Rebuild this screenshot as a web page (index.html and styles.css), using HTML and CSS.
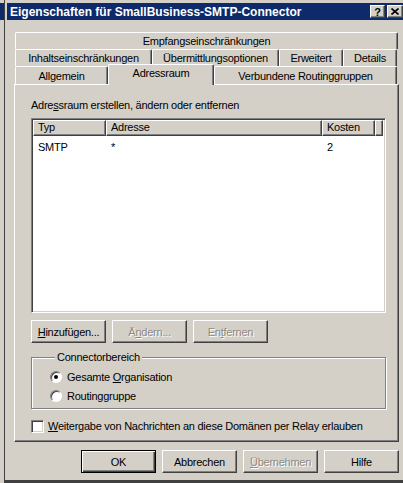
FILE: index.html
```html
<!DOCTYPE html>
<html lang="de">
<head>
  <meta charset="UTF-8">
  <title>Eigenschaften für SmallBusiness-SMTP-Connector</title>
  <link rel="stylesheet" href="styles.css">
</head>
<body>
  <div class="screen">
    <div class="behind"><div class="behind-cap"></div></div>
    <div class="window">
      <!-- Title bar -->
      <div class="titlebar">
        <span class="title">Eigenschaften für SmallBusiness-SMTP-Connector</span>
        <span class="capbtn help">?</span>
        <span class="capbtn close">
          <svg width="8" height="7" viewBox="0 0 8 7"><path d="M0.5 0.5 L7.5 6.5 M7.5 0.5 L0.5 6.5" stroke="#000" stroke-width="1.6"/></svg>
        </span>
      </div>

      <div class="client">
        <!-- Tabs -->
        <div class="tabrow">
          <div class="tab full">Empfangseinschränkungen</div>
        </div>
        <div class="tabrow">
          <div class="tab w-inhalt">Inhaltseinschränkungen</div>
          <div class="tab w-ueber">Übermittlungsoptionen</div>
          <div class="tab w-erw">Erweitert</div>
          <div class="tab w-det">Details</div>
        </div>
        <div class="tabrow last">
          <div class="tab w-allg">Allgemein</div>
          <div class="tab w-addr selected">Adressraum</div>
          <div class="tab w-verb">Verbundene Routinggruppen</div>
        </div>

        <!-- Tab page -->
        <div class="panel">
          <div class="hint">Adre<u>s</u>sraum erstellen, ändern oder entfernen</div>
          <div class="list">
            <div class="list-head">
              <div class="col c-typ">Typ</div>
              <div class="col c-addr">Adresse</div>
              <div class="col c-cost">Kosten</div>
              <div class="col c-rest"></div>
            </div>
            <div class="list-row">
              <div class="cell c-typ">SMTP</div>
              <div class="cell c-addr">*</div>
              <div class="cell c-cost">2</div>
            </div>
          </div>

          <div class="btnrow">
            <div class="btn"><span><u>H</u>inzufügen...</span></div>
            <div class="btn disabled"><span>Ä<u>n</u>dern...</span></div>
            <div class="btn disabled"><span>En<u>t</u>fernen</span></div>
          </div>

          <fieldset class="group">
            <legend>Connectorbereich</legend>
            <div class="option"><span class="radio checked"></span><span>Gesamte <u>O</u>rganisation</span></div>
            <div class="option"><span class="radio"></span><span>Routinggruppe</span></div>
          </fieldset>

          <div class="option check-line"><span class="checkbox"></span><span><u>W</u>eitergabe von Nachrichten an diese Domänen per Relay erlauben</span></div>
        </div>

        <!-- Dialog buttons -->
        <div class="footer">
          <div class="btn default">OK</div>
          <div class="btn">Abbrechen</div>
          <div class="btn disabled"><span><u>Ü</u>bernehmen</span></div>
          <div class="btn">Hilfe</div>
        </div>
      </div>
    </div>
  </div>
</body>
</html>
```

FILE: styles.css
```css
* {
  box-sizing: border-box;
}
body {
  margin: 0;
  background-color: #d4d0c8;
  font-family: "Liberation Sans", Arial, sans-serif;
  font-size: 11px;
  letter-spacing: -0.25px;
  color: #000;
}
.screen {
  display: flex;
  height: 483px;
  overflow: hidden;
}
/* Window behind the dialog */
.behind {
  width: 5px;
  border-right: 1px solid #404040;
  padding-top: 3px;
}
.behind-cap {
  height: 17px;
  background-color: #0d2a6a;
}
.window {
  flex: 1;
  display: flex;
  flex-direction: column;
  padding-left: 2px;
  border-bottom: 3px solid #404040;
}
/* Title bar */
.titlebar {
  margin-top: 3px;
  height: 17px;
  background-color: #0d2a6a;
  color: #fff;
  display: flex;
  align-items: center;
  gap: 2px;
  padding-left: 3px;
}
.title {
  flex: 1;
  font-weight: bold;
  font-size: 12px;
  letter-spacing: 0;
  white-space: nowrap;
}
.capbtn {
  width: 15px;
  height: 13px;
  background-color: #d4d0c8;
  color: #000;
  border: 1px solid;
  border-color: #fff #404040 #404040 #fff;
  box-shadow: inset -1px -1px #808080;
  display: flex;
  align-items: center;
  justify-content: center;
  font-weight: bold;
  font-size: 11px;
}
.capbtn.close {
  width: 16px;
}
.client {
  flex: 1;
  padding: 12px 4px 0 7px;
}
/* Tabs */
.tabrow {
  display: flex;
  height: 17px;
  padding-left: 1px;
}
.tabrow.last {
  height: 18px;
}
.tab {
  height: 100%;
  border-top: 1px solid #fff;
  border-left: 1px solid #fff;
  border-right: 1px solid #404040;
  box-shadow: inset -1px 0 #808080;
  border-radius: 2px 2px 0 0;
  display: flex;
  align-items: center;
  justify-content: center;
  white-space: nowrap;
  background-color: #d4d0c8;
}
.tab.full { width: 383px; }
.w-inhalt { width: 137px; }
.w-ueber { width: 127px; }
.w-erw { width: 64px; }
.w-det { width: 54px; }
.w-allg { width: 93px; padding-top: 1px; }
.w-addr { width: 106px; }
.w-verb { width: 183px; padding-top: 1px; }
.tab.selected {
  position: relative;
  z-index: 2;
  height: 21px;
  margin-top: -2px;
  align-items: flex-start;
  padding-top: 2px;
}
/* Tab page */
.panel {
  height: 358px;
  border: 1px solid;
  border-color: #fff #404040 #404040 #fff;
  box-shadow: inset -1px -1px #808080;
  padding: 14px 12px 0 16px;
}
.hint {
  line-height: 13px;
  margin-bottom: 6px;
}
.list {
  height: 195px;
  background-color: #fff;
  border: 1px solid;
  border-color: #808080 #fff #fff #808080;
  box-shadow: inset 1px 1px #404040, inset -1px -1px #d4d0c8;
  padding: 1px 2px 2px 1px;
}
.list-head {
  display: flex;
  height: 16px;
}
.col {
  background-color: #d4d0c8;
  border: 1px solid;
  border-color: #fff #404040 #404040 #fff;
  box-shadow: inset -1px -1px #808080;
  padding-left: 4px;
  line-height: 13px;
}
.c-typ { width: 73px; }
.c-addr { width: 216px; }
.c-cost { width: 53px; }
.c-rest { flex: 1; }
.list-row {
  display: flex;
  margin-top: 4px;
  line-height: 14px;
}
.cell {
  padding-left: 5px;
}
/* Buttons */
.btnrow {
  display: flex;
  gap: 6px;
  margin-top: 7px;
}
.btn {
  width: 75px;
  height: 23px;
  border: 1px solid;
  border-color: #fff #404040 #404040 #fff;
  box-shadow: inset -1px -1px #808080;
  display: flex;
  align-items: center;
  justify-content: center;
  white-space: nowrap;
}
.btn.disabled {
  color: #8c8a84;
  text-shadow: 1px 1px #fff;
}
.btn.default {
  border-color: #000;
  box-shadow: inset 1px 1px #fff, inset -1px -1px #404040, inset -2px -2px #808080;
}
/* Group box */
.group {
  margin: 8px 0 0;
  border: 1px solid #808080;
  box-shadow: inset 1px 1px #fff, 1px 1px #fff;
  padding: 6px 0 5px 18px;
  min-width: 0;
}
.group legend {
  padding: 0 2px;
  margin-left: 5px;
  line-height: 13px;
  background-color: #d4d0c8;
}
.option {
  display: flex;
  align-items: center;
  height: 14px;
  gap: 5px;
}
.option + .option {
  margin-top: 5px;
}
.radio {
  width: 12px;
  height: 12px;
  border-radius: 50%;
  background-color: #fff;
  border: 1px solid;
  border-color: #808080 #fff #fff #808080;
  box-shadow: inset 1px 1px #404040;
  display: flex;
  align-items: center;
  justify-content: center;
}
.radio.checked::after {
  content: "";
  width: 4px;
  height: 4px;
  border-radius: 50%;
  background-color: #000;
}
.check-line {
  margin-top: 10px;
  gap: 4px;
}
.checkbox {
  width: 13px;
  height: 13px;
  background-color: #fff;
  border: 1px solid;
  border-color: #808080 #fff #fff #808080;
  box-shadow: inset 1px 1px #404040, inset -1px -1px #d4d0c8;
}
.footer {
  display: flex;
  justify-content: flex-end;
  gap: 6px;
  margin-top: 8px;
}
```
